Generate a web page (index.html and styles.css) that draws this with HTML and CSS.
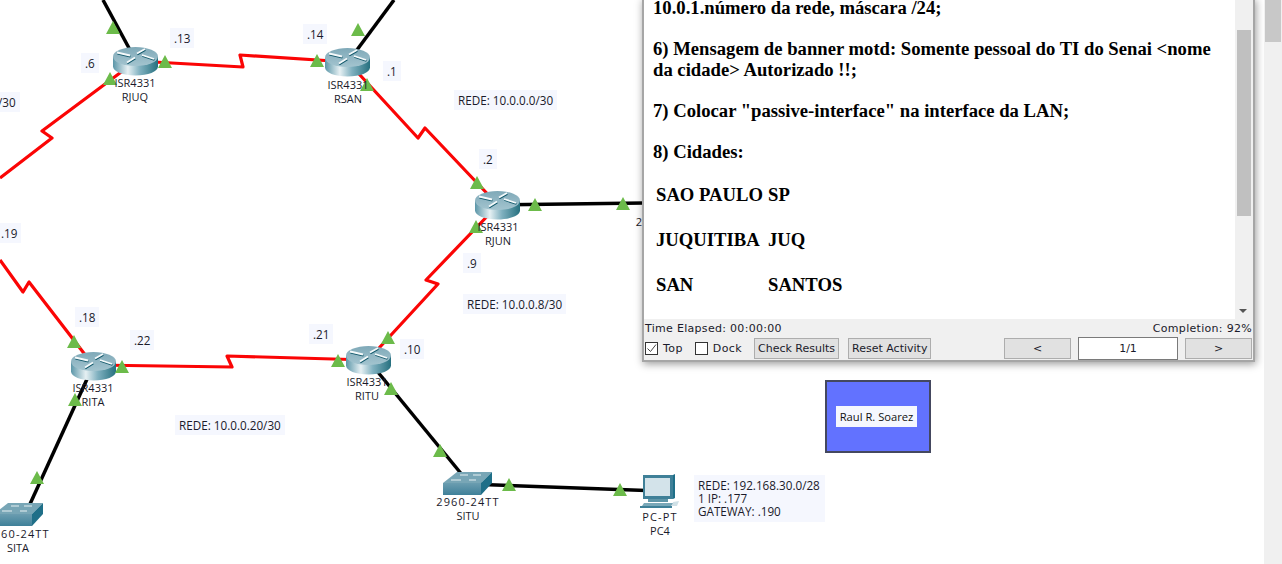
FILE: index.html
```html
<!DOCTYPE html>
<html lang="pt">
<head>
<meta charset="utf-8">
<title>Packet Tracer</title>
<link rel="stylesheet" href="styles.css">
</head>
<body>
<div class="app">
  <main class="canvas">
    <svg class="links" width="1264" height="564" viewBox="0 0 1264 564">
      <defs>
        <linearGradient id="rside" x1="0" x2="1" y1="0" y2="0">
          <stop offset="0" stop-color="#5b96a8"/><stop offset=".33" stop-color="#e6f0f3"/><stop offset=".6" stop-color="#7fb0bf"/><stop offset="1" stop-color="#26707f"/>
        </linearGradient>
        <linearGradient id="rtop" x1="0" x2="0" y1="0" y2="1">
          <stop offset="0" stop-color="#7fa9b8"/><stop offset="1" stop-color="#a3c4cf"/>
        </linearGradient>
        <linearGradient id="sfront" x1="0" x2="0" y1="0" y2="1">
          <stop offset="0" stop-color="#6b9db0"/><stop offset="1" stop-color="#3f8099"/>
        </linearGradient>
        <symbol id="router" viewBox="0 0 45 29">
          <path d="M0 9.500v10c0 5 10 9 22.500 9s22.500-4 22.500-9v-10z" fill="url(#rside)"/>
          <ellipse cx="22.500" cy="9.500" rx="22.500" ry="9.500" fill="url(#rtop)"/>
          <path d="M4 5.500L17 8.500M29 8L41 12M24 6.500L32 2M14 15.500L22 10.500" fill="none" stroke="#11586b" stroke-width="1.600" transform="translate(.4 1.100)"/>
          <path d="M4 5.500L17 8.500M29 8L41 12M24 6.500L32 2M14 15.500L22 10.500" fill="none" stroke="#f4f9fa" stroke-width="1.800"/>
        </symbol>
        <symbol id="switch" viewBox="0 0 50 24">
          <path d="M14 0h35L38 11H0z" fill="#78a6b6"/>
          <path d="M0 11h38v12H0z" fill="url(#sfront)"/>
          <path d="M38 11L49 0v11L38 23z" fill="#1f6f88"/>
          <path d="M17 3h8M30 3h8M8 8h10M26 8h7" stroke="#e6f0f2" stroke-width="1"/>
        </symbol>
      </defs>

      <g class="red">
        <polyline points="136,61 243,67 240,55 348,62"/>
        <polyline points="348,62 418,138 425,128 498,205"/>
        <polyline points="498,205 426,280 438,284 368,360"/>
        <polyline points="368,360 227,356 232,367 93,365"/>
        <polyline points="93,365 29,282 23,292 0,260"/>
        <polyline points="136,61 42,131 52,138 0,178"/>
      </g>
      <g class="black">
        <line x1="103" y1="0" x2="136" y2="61"/>
        <line x1="394" y1="0" x2="348" y2="62"/>
        <line x1="498" y1="205" x2="644" y2="203"/>
        <line x1="93" y1="366" x2="25" y2="515"/>
        <line x1="368" y1="360" x2="468" y2="482"/>
        <line x1="468" y1="484" x2="660" y2="491"/>
      </g>

      <use href="#router" x="113" y="47" width="45" height="29"/>
      <use href="#router" x="325" y="48" width="45" height="29"/>
      <use href="#router" x="475" y="191" width="45" height="29"/>
      <use href="#router" x="71" y="352" width="45" height="29"/>
      <use href="#router" x="346" y="346" width="45" height="29"/>
      <use href="#switch" x="443" y="472" width="50" height="24"/>
      <use href="#switch" x="-6" y="503" width="50" height="24"/>

      <g class="pc">
        <path d="M643 475h30v24h-30z" fill="#3f8098"/>
        <path d="M645 478h25v18h-25z" fill="#d3e3ea"/>
        <path d="M673 475l2-1v24l-2 1z" fill="#1f6f88"/>
        <path d="M648 499h20v3h-20z" fill="#5f96a8"/>
        <path d="M644 503h30l-3 3h-29z" fill="#7aa8b8"/>
        <path d="M640 506h32v2h-32z" fill="#3f8098"/>
        <path d="M673 502l6-1-2 5h-5z" fill="#cfe0e6"/>
      </g>

      <g class="tri">
        <polygon points="113,21 120,34 106,34"/>
        <polygon points="165,55 172,68 158,68"/>
        <polygon points="110,72 117,85 103,85"/>
        <polygon points="317,54 324,67 310,67"/>
        <polygon points="358,23 365,36 351,36"/>
        <polygon points="367,78 374,91 360,91"/>
        <polygon points="477,176 484,189 470,189"/>
        <polygon points="535,198 542,211 528,211"/>
        <polygon points="623,197 630,210 616,210"/>
        <polygon points="476,220 483,233 469,233"/>
        <polygon points="388,331 395,344 381,344"/>
        <polygon points="338,354 345,367 331,367"/>
        <polygon points="391,382 398,395 384,395"/>
        <polygon points="440,444 447,457 433,457"/>
        <polygon points="509,478 516,491 502,491"/>
        <polygon points="620,483 627,496 613,496"/>
        <polygon points="37,471 44,484 30,484"/>
        <polygon points="75,393 82,406 68,406"/>
        <polygon points="74,335 81,348 67,348"/>
        <polygon points="122,360 129,373 115,373"/>
      </g>
    </svg>

    <div class="dev dev-rjuq">ISR4331<br>RJUQ</div>
    <div class="dev dev-rsan">ISR4331<br>RSAN</div>
    <div class="dev dev-rjun">ISR4331<br>RJUN</div>
    <div class="dev dev-rita">ISR4331<br>RITA</div>
    <div class="dev dev-ritu">ISR4331<br>RITU</div>
    <div class="dev dev-situ"><span class="wide">2960-24TT</span><br>SITU</div>
    <div class="dev dev-sita"><span class="wide">2960-24TT</span><br>SITA</div>
    <div class="dev dev-pc"><span class="wide">PC-PT</span><br>PC4</div>
    <div class="dev dev-cut">2</div>

    <div class="note n-13">.13</div>
    <div class="note n-14">.14</div>
    <div class="note n-6">.6</div>
    <div class="note n-1">.1</div>
    <div class="note n-2">.2</div>
    <div class="note n-9">.9</div>
    <div class="note n-21">.21</div>
    <div class="note n-10">.10</div>
    <div class="note n-18">.18</div>
    <div class="note n-22">.22</div>
    <div class="note n-19">.19</div>
    <div class="note n-30">/30</div>
    <div class="note r-0">REDE: 10.0.0.0/30</div>
    <div class="note r-8">REDE: 10.0.0.8/30</div>
    <div class="note r-20">REDE: 10.0.0.20/30</div>
    <div class="note r-192">REDE: 192.168.30.0/28<br>1 IP: .177<br>GATEWAY: .190</div>

    <div class="cluster"><span class="cluster-name">Raul R. Soarez</span></div>

    <section class="window">
      <div class="body">
        <div class="doc">
          <p>10.0.1.número da rede, máscara /24;</p>
          <p>6) Mensagem de banner motd: Somente pessoal do TI do Senai &lt;nome da cidade&gt; Autorizado !!;</p>
          <p>7) Colocar "passive-interface" na interface da LAN;</p>
          <p class="last">8) Cidades:</p>
          <div class="city"><span class="c1">SAO PAULO</span><span>SP</span></div>
          <div class="city"><span class="c1">JUQUITIBA</span><span>JUQ</span></div>
          <div class="city"><span class="c1">SAN</span><span>SANTOS</span></div>
        </div>
        <div class="vbar">
          <div class="vthumb"></div>
          <div class="varrow"></div>
        </div>
      </div>
      <div class="status">
        <div class="row1"><span>Time Elapsed: 00:00:00</span><span>Completion: 92%</span></div>
        <div class="row2">
          <span class="check on"><svg width="11" height="11" viewBox="0 0 11 11"><path d="M1.500 5.500l3 3L10 1.500" fill="none" stroke="#444" stroke-width="1"/></svg></span><span class="check-label">Top</span>
          <span class="check"></span><span class="check-label">Dock</span>
          <span class="btn">Check Results</span>
          <span class="btn">Reset Activity</span>
          <span class="spacer"></span>
          <span class="nav">&lt;</span>
          <span class="page">1/1</span>
          <span class="nav">&gt;</span>
        </div>
      </div>
    </section>
  </main>
  <aside class="pagebar"><div class="pagethumb"></div></aside>
</div>
</body>
</html>
```
FILE: styles.css
```css
* { box-sizing: border-box; }
html, body { margin: 0; height: 100%; overflow: hidden; background: #fff; }
body { font-family: "Open Sans", "Noto Sans", sans-serif; color: #111; }
.app { display: flex; width: 1282px; height: 564px; }
.canvas { position: relative; flex: 1; overflow: hidden; background: #fff; }
.links { position: absolute; left: 0; top: 0; }
.red polyline { fill: none; stroke: #fb0505; stroke-width: 3.2; stroke-linejoin: round; }
.black line { stroke: #000; stroke-width: 3.5; }
.tri polygon { fill: #6cbb4a; }

.dev { position: absolute; width: 80px; margin-left: -40px; text-align: center; font-size: 11px; line-height: 13.500px; color: #1a1a2a; }
.wide { letter-spacing: 1.100px; }
.dev-rjuq { left: 135px; top: 76px; }
.dev-rsan { left: 348px; top: 78px; }
.dev-rjun { left: 498px; top: 220px; }
.dev-rita { left: 93px; top: 381px; }
.dev-ritu { left: 367px; top: 375px; }
.dev-situ { left: 468px; top: 495px; }
.dev-sita { left: 18px; top: 527px; }
.dev-pc { left: 660px; top: 510px; }
.dev-cut { left: 639px; top: 215px; }

.note { position: absolute; background: #f5f7fe; font-size: 11.700px; line-height: 14px; padding: 3px 4px; color: #1a1a2a; white-space: nowrap; }
.n-13 { left: 170px; top: 28px; }
.n-14 { left: 303px; top: 24px; }
.n-6 { left: 81px; top: 53px; }
.n-1 { left: 383px; top: 61px; }
.n-2 { left: 479px; top: 149px; }
.n-9 { left: 463px; top: 253px; }
.n-21 { left: 309px; top: 324px; }
.n-10 { left: 400px; top: 339px; }
.n-18 { left: 75px; top: 307px; }
.n-22 { left: 130px; top: 330px; }
.n-19 { left: -3px; top: 223px; }
.n-30 { left: -6px; top: 92px; }
.r-0 { left: 454px; top: 90px; }
.r-8 { left: 463px; top: 294px; }
.r-20 { left: 175px; top: 415px; }
.r-192 { left: 694px; top: 475px; width: 131px; height: 47px; padding: 4px 4px; line-height: 13px; }

.cluster { position: absolute; left: 825px; top: 380px; width: 106px; height: 73px; background: #6272ff; border: 2px solid #44485f; display: flex; align-items: center; justify-content: center; padding-right: 3px; }
.cluster-name { background: #f5f7fe; font-size: 11.200px; line-height: 21px; padding: 0 4px; }

.window { position: absolute; left: 642px; top: -2px; width: 613px; height: 364px; display: flex; flex-direction: column; background: #f0f0f0; border: 2px solid #a6a6a6; border-top: 0; box-shadow: 1px 2px 8px rgba(0,0,0,.4); }
.body { flex: 1; min-height: 0; display: flex; background: #fff; }
.doc { flex: 1; padding: 0 18px 0 9px; margin-top: -1px; font-family: "Liberation Serif", serif; font-weight: 700; font-size: 18.670px; line-height: 21px; color: #000; }
.doc p { margin: 0 0 20px; }
.doc p.last { margin-bottom: 22px; }
.city { display: flex; padding-left: 3px; margin-bottom: 24px; }
.c1 { width: 112px; }
.vbar { width: 18px; background: #f0f0f0; display: flex; flex-direction: column; padding-top: 32px; position: relative; }
.vthumb { width: 14px; height: 186px; margin-left: 2px; background: #c0c0c0; }
.varrow { position: absolute; left: 4px; bottom: 6px; width: 0; height: 0; border: 4px solid transparent; border-top: 4px solid #555; border-bottom: 0; }

.status { height: 41px; padding: 0 1px 0 1px; font-family: "DejaVu Sans", sans-serif; font-size: 11px; color: #1a1a2a; }
.row1 { display: flex; justify-content: space-between; height: 17px; align-items: center; padding-top: 2px; letter-spacing: .3px; }
.row2 { display: flex; align-items: center; height: 22px; margin-top: 1px; }
.check { width: 13px; height: 13px; border: 1px solid #333; background: #fff; display: flex; align-items: center; justify-content: center; flex: none; }
.check-label { margin: 0 12px 0 5px; letter-spacing: .4px; }
.btn { height: 21px; padding: 0 3px; background: #e1e1e1; border: 1px solid #adadad; line-height: 19px; margin-right: 9px; white-space: nowrap; }
.spacer { flex: 1; }
.nav { width: 67px; height: 21px; background: #e1e1e1; border: 1px solid #adadad; text-align: center; line-height: 19px; }
.page { width: 100px; height: 23px; margin: 0 7px; background: #fff; border: 1px solid #7a7a7a; text-align: center; line-height: 21px; }

.pagebar { width: 18px; background: #f0f0f0; padding: 0 1px; }
.pagethumb { height: 42px; background: #c8c8c8; }
```
